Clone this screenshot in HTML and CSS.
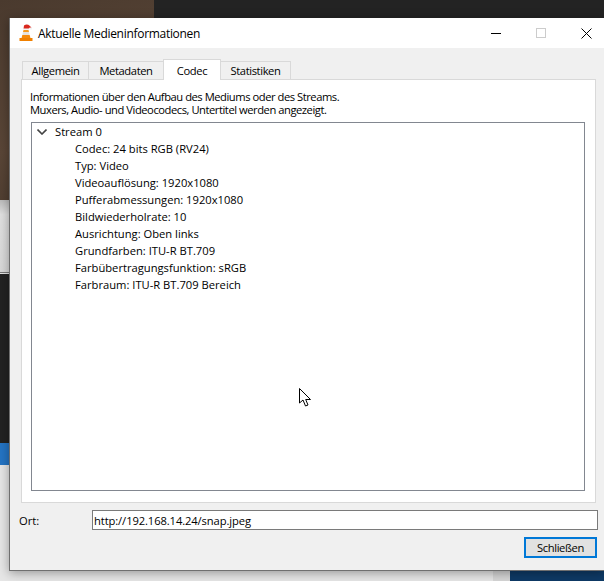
FILE: index.html
```html
<!DOCTYPE html>
<html lang="de">
<head>
    <meta charset="UTF-8">
    <meta name="viewport" content="width=device-width, initial-scale=1.0">
    <title>Aktuelle Medieninformationen</title>
    <link rel="stylesheet" href="styles.css">
</head>
<body>
    <!-- desktop behind the dialog -->
    <div class="bg-wood"></div>
    <div class="bg-dark-top"></div>
    <div class="bg-light"></div>
    <div class="bg-dark"></div>
    <div class="bg-blue"></div>
    <div class="bg-light-bottom"></div>
    <div class="bg-navy"></div>

    <div class="window">
        <div class="titlebar">
            <svg class="app-icon" width="14" height="18" viewBox="0 0 14 18">
                <path d="M5 1.5 Q8 -0.5 11 2 L13 4.5 L10.5 4 L9.5 5 L4.5 5 Z" fill="#d9281e"/>
                <rect x="10.5" y="3.5" width="2.5" height="2" fill="#f3f3f3"/>
                <rect x="4" y="4.5" width="6" height="1.4" fill="#f3f3f3"/>
                <path d="M4.5 6 L9.5 6 L10 8 L4 8 Z" fill="#f59a1e"/>
                <path d="M4 8 L10 8 L10.7 11 L3.3 11 Z" fill="#e6e2dc"/>
                <path d="M3.3 11 L10.7 11 L11.4 14 L2.6 14 Z" fill="#f58a0b"/>
                <path d="M0.5 14 L13.5 14 L13.5 17 L0.5 17 Z" fill="#f08000"/>
            </svg>
            <span class="window-title">Aktuelle Medieninformationen</span>
            <div class="window-controls">
                <svg class="ctl" width="10" height="10" viewBox="0 0 10 10"><path d="M0 5.5 H10" stroke="#000" fill="none"/></svg>
                <svg class="ctl" width="10" height="10" viewBox="0 0 10 10"><rect x="0.5" y="0.5" width="9" height="9" stroke="#ccc" fill="none"/></svg>
                <svg class="ctl" width="11" height="11" viewBox="0 0 11 11"><path d="M0.5 0.5 L10.5 10.5 M10.5 0.5 L0.5 10.5" stroke="#000" fill="none"/></svg>
            </div>
        </div>

        <div class="content">
            <div class="tabs">
                <div class="tab tab-allgemein">Allgemein</div>
                <div class="tab tab-metadaten">Metadaten</div>
                <div class="tab tab-active">Codec</div>
                <div class="tab tab-statistiken">Statistiken</div>
            </div>
            <div class="pane">
                <p class="intro">Informationen über den Aufbau des Mediums oder des Streams.<br>Muxers, Audio- und Videocodecs, Untertitel werden angezeigt.</p>
                <div class="tree">
                    <div class="tree-row">
                        <svg class="chevron" width="10" height="6" viewBox="0 0 10 6"><path d="M0.5 0.5 L5 5 L9.5 0.5" stroke="#444" stroke-width="1.6" fill="none"/></svg>
                        <span>Stream 0</span>
                    </div>
                    <div class="tree-row child">Codec: 24 bits RGB (RV24)</div>
                    <div class="tree-row child">Typ: Video</div>
                    <div class="tree-row child">Videoauflösung: 1920x1080</div>
                    <div class="tree-row child">Pufferabmessungen: 1920x1080</div>
                    <div class="tree-row child">Bildwiederholrate: 10</div>
                    <div class="tree-row child">Ausrichtung: Oben links</div>
                    <div class="tree-row child">Grundfarben: ITU-R BT.709</div>
                    <div class="tree-row child">Farbübertragungsfunktion: sRGB</div>
                    <div class="tree-row child">Farbraum: ITU-R BT.709 Bereich</div>
                </div>
            </div>
            <div class="location">
                <label for="ort">Ort:</label>
                <input type="text" id="ort" value="http://192.168.14.24/snap.jpeg">
            </div>
            <div class="actions">
                <button>Schließen</button>
            </div>
        </div>
    </div>

    <svg class="cursor" width="14" height="20" viewBox="0 0 14 20">
        <path d="M0.5 0.5 L0.5 15 L4 12 L6.5 18 L9 17 L6.7 11.5 L11.5 11.5 Z" fill="#fff" stroke="#000" stroke-width="1"/>
    </svg>
</body>
</html>
```

FILE: styles.css
```css
html, body {
    margin: 0;
    height: 100%;
    overflow: hidden;
}

body {
    position: relative;
    width: 604px;
    height: 581px;
    background: #e4e4e4;
    font-family: 'Open Sans', 'Noto Sans', sans-serif;
    font-size: 11.2px;
    color: #000;
}

.bg-wood {
    position: absolute;
    left: 0;
    top: 0;
    width: 154px;
    height: 200px;
    background: linear-gradient(160deg, #4a3a2e, #5a4637 60%, #46372b);
}

.bg-dark-top {
    position: absolute;
    left: 154px;
    top: 0;
    right: 0;
    height: 18px;
    background: #232323;
}

.bg-light {
    position: absolute;
    left: 0;
    top: 200px;
    width: 9px;
    height: 72px;
    background: linear-gradient(#bbb, #e0e0e0 20%, #d8d8d8);
    border-bottom: 1px solid #777;
}

.bg-dark {
    position: absolute;
    left: 0;
    top: 274px;
    width: 9px;
    height: 169px;
    background: #222;
}

.bg-blue {
    position: absolute;
    left: 0;
    top: 443px;
    width: 9px;
    height: 22px;
    background: #2474c4;
}

.bg-light-bottom {
    position: absolute;
    left: 0;
    top: 465px;
    width: 510px;
    height: 116px;
    background: linear-gradient(to right, #e6e6e6 0, #e6e6e6 493px, #d6d6d6 493px);
}

.bg-navy {
    position: absolute;
    left: 510px;
    top: 571px;
    right: 0;
    height: 10px;
    background: #0e3a66;
}

.window {
    position: absolute;
    left: 9px;
    top: 18px;
    width: 595px;
    height: 553px;
    box-sizing: border-box;
    display: flex;
    flex-direction: column;
    background: #f0f0f0;
    border-left: 1px solid #6f6f6f;
    border-bottom: 1px solid #6f6f6f;
    box-shadow: 0 2px 10px rgba(0, 0, 0, 0.35);
}

.titlebar {
    height: 30px;
    flex-shrink: 0;
    display: flex;
    align-items: center;
    background: #fff;
    padding-left: 9px;
}

.app-icon {
    margin-right: 5px;
    flex-shrink: 0;
}

.window-title {
    font-size: 12px;
    letter-spacing: -0.3px;
    flex: 1;
}

.window-controls {
    display: flex;
    align-items: center;
    margin-right: 12px;
}

.ctl {
    margin-left: 35px;
}

.content {
    flex: 1;
    display: flex;
    flex-direction: column;
    padding: 11px 6px 0 11px;
}

.tabs {
    display: flex;
    align-items: flex-start;
    height: 20px;
    padding-left: 1px;
    position: relative;
    z-index: 1;
}

.tab {
    box-sizing: border-box;
    height: 18px;
    margin-top: 2px;
    text-align: center;
    line-height: 17px;
    letter-spacing: -0.4px;
    background: #f0f0f0;
    border: 1px solid #d9d9d9;
    border-bottom: none;
    margin-left: -1px;
}

.tab-allgemein { width: 67px; margin-left: 0; }
.tab-metadaten { width: 76px; }
.tab-statistiken { width: 71px; }

.tab-active {
    width: 58px;
    height: 21px;
    margin-top: 0;
    background: #fff;
    line-height: 21px;
    position: relative;
}

.pane {
    box-sizing: border-box;
    width: 575px;
    height: 424px;
    flex-shrink: 0;
    display: flex;
    flex-direction: column;
    background: #fff;
    border: 1px solid #d9d9d9;
    padding: 10px 10px 11px 9px;
}

.intro {
    margin: 0 0 3px -1px;
    line-height: 13px;
    height: 29px;
    letter-spacing: -0.46px;
}

.tree {
    flex: 1;
    border: 1px solid #828790;
    background: #fff;
}

.tree-row {
    height: 17px;
    line-height: 17px;
    display: flex;
    align-items: center;
    padding-left: 5px;
    white-space: nowrap;
}

.tree-row span {
    margin-left: 8px;
}

.tree-row.child {
    padding-left: 43px;
}

.location {
    display: flex;
    align-items: center;
    margin-top: 7px;
    margin-left: -2px;
}

.location label {
    width: 73px;
}

.location input {
    box-sizing: border-box;
    width: 506px;
    height: 20px;
    padding: 0 1px;
    border: 1px solid #7a7a7a;
    background: #fff;
    font: inherit;
    letter-spacing: -0.1px;
    border-radius: 0;
    outline: none;
}

.actions {
    display: flex;
    justify-content: flex-end;
    margin-top: 7px;
    margin-right: 1px;
}

button {
    box-sizing: border-box;
    width: 73px;
    height: 21px;
    padding: 0;
    border: 2px solid #0078d7;
    background: #e1e1e1;
    font: inherit;
    letter-spacing: -0.4px;
    color: #000;
}

.cursor {
    position: absolute;
    left: 299px;
    top: 388px;
}
```
